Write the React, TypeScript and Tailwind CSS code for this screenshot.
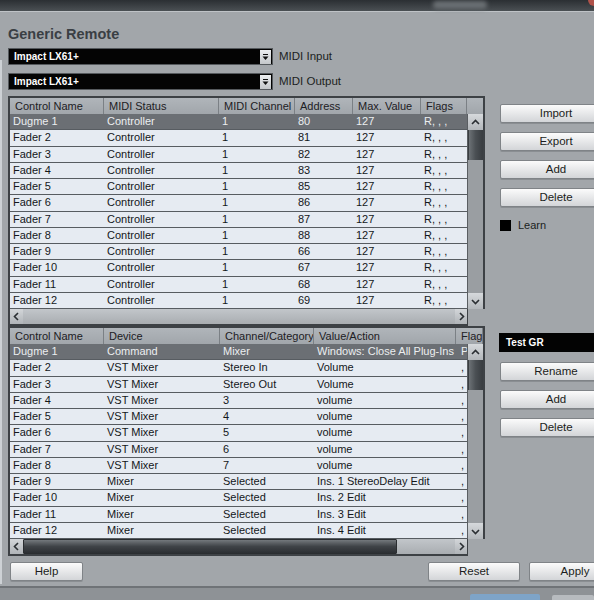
import React from "react";

const rows1 = [
  ["Dugme 1", "Controller", "1", "80", "127", "R, , ,"],
  ["Fader 2", "Controller", "1", "81", "127", "R, , ,"],
  ["Fader 3", "Controller", "1", "82", "127", "R, , ,"],
  ["Fader 4", "Controller", "1", "83", "127", "R, , ,"],
  ["Fader 5", "Controller", "1", "85", "127", "R, , ,"],
  ["Fader 6", "Controller", "1", "86", "127", "R, , ,"],
  ["Fader 7", "Controller", "1", "87", "127", "R, , ,"],
  ["Fader 8", "Controller", "1", "88", "127", "R, , ,"],
  ["Fader 9", "Controller", "1", "66", "127", "R, , ,"],
  ["Fader 10", "Controller", "1", "67", "127", "R, , ,"],
  ["Fader 11", "Controller", "1", "68", "127", "R, , ,"],
  ["Fader 12", "Controller", "1", "69", "127", "R, , ,"],
];

const rows2 = [
  ["Dugme 1", "Command", "Mixer", "Windows: Close All Plug-Ins", "P"],
  ["Fader 2", "VST Mixer", "Stereo In", "Volume", ","],
  ["Fader 3", "VST Mixer", "Stereo Out", "Volume", ","],
  ["Fader 4", "VST Mixer", "3", "volume", ","],
  ["Fader 5", "VST Mixer", "4", "volume", ","],
  ["Fader 6", "VST Mixer", "5", "volume", ","],
  ["Fader 7", "VST Mixer", "6", "volume", ","],
  ["Fader 8", "VST Mixer", "7", "volume", ","],
  ["Fader 9", "Mixer", "Selected", "Ins. 1 StereoDelay Edit", ","],
  ["Fader 10", "Mixer", "Selected", "Ins. 2 Edit", ","],
  ["Fader 11", "Mixer", "Selected", "Ins. 3 Edit", ","],
  ["Fader 12", "Mixer", "Selected", "Ins. 4 Edit", ","],
];

function Chevron({ dir }: { dir: "up" | "down" | "left" | "right" }) {
  const pts = {
    up: "2,7 5.5,3.5 9,7",
    down: "2,4 5.5,7.5 9,4",
    left: "7,2 3.5,5.5 7,9",
    right: "4,2 7.5,5.5 4,9",
  }[dir];
  return (
    <svg width="11" height="11" viewBox="0 0 11 11">
      <polyline points={pts} fill="none" stroke="#2a2e32" strokeWidth="1.6" />
    </svg>
  );
}

function Button({ label, w }: { label: string; w: string }) {
  return (
    <div
      className={`${w} h-[19px] shrink-0 flex items-center justify-center rounded-[2px] border border-[#7f8387] bg-linear-to-b from-[#fbfbfb] to-[#d3d5d8] text-[11.5px] text-[#1b1d20] shadow-[0_1px_0_#8a8e92]`}
    >
      {label}
    </div>
  );
}

function Dropdown({ value, label }: { value: string; label: string }) {
  return (
    <div className="flex h-[17px] items-center">
      <div className="flex h-[17px] w-[265px] items-center justify-between border border-[#55595d] bg-[#040404] pl-[5px] pr-[1px]">
        <span className="text-[10px] font-bold text-white">{value}</span>
        <div className="flex h-[14px] w-[11px] items-center justify-center bg-linear-to-b from-[#eceef0] to-[#c4c7ca]">
          <svg width="7" height="8" viewBox="0 0 7 8">
            <rect x="1" y="1" width="5" height="1" fill="#111" />
            <polygon points="0.5,3.5 6.5,3.5 3.5,7" fill="#111" />
          </svg>
        </div>
      </div>
      <span className="ml-[6px] text-[11.5px] text-[#1c1f22]">{label}</span>
    </div>
  );
}

function VScroll() {
  return (
    <div className="flex w-[16px] flex-col border-l border-[#5a5e62] bg-[#9a9ea2]">
      <div className="flex h-[16px] items-center justify-center bg-linear-to-b from-[#d6d9dc] to-[#b3b7bb]">
        <Chevron dir="up" />
      </div>
      <div className="h-[30px] border-x border-[#3a3e42] bg-linear-to-r from-[#6d7276] via-[#4b5054] to-[#3a3e42]" />
      <div className="flex-1" />
      <div className="flex h-[16px] items-center justify-center bg-linear-to-b from-[#d6d9dc] to-[#b3b7bb]">
        <Chevron dir="down" />
      </div>
    </div>
  );
}

function Table({
  cols,
  headers,
  rows,
  headerTail,
  thumb,
  lastPad,
}: {
  cols: number[];
  headers: string[];
  rows: string[][];
  headerTail: boolean;
  thumb: number;
  lastPad: number;
}) {
  return (
    <div className="flex w-[477px] shrink-0 flex-col">
      <div className="border-x-2 border-t-2 border-[#3d4145]">
        {/* Header */}
        <div className="flex h-[16px] bg-linear-to-b from-[#b0b5ba] to-[#a1a6ab] text-[11px] text-[#1d2024]">
          {headers.map((h, i) => {
            const last = i === headers.length - 1;
            const w = last && !headerTail ? cols[i] + 16 : cols[i];
            return (
              <div
                key={h}
                style={{ width: w }}
                className="shrink-0 overflow-hidden whitespace-nowrap border-r border-[#7b8085] pl-[5px] leading-[16px]"
              >
                {h}
              </div>
            );
          })}
          {headerTail && <div className="w-[16px] shrink-0" />}
        </div>
        {/* Body */}
        <div className="flex h-[195px]">
          <div className="flex w-[457px] flex-col">
            {rows.map((r, ri) => (
              <div
                key={ri}
                className={`flex h-[16.25px] shrink-0 border-b border-[#575c61] text-[11px] leading-[15px] ${
                  ri === 0 ? "bg-[#6b6f74] text-[#eceef0]" : "bg-[#e6ebf2] text-[#14171a]"
                }`}
              >
                {r.map((c, ci) => (
                  <div
                    key={ci}
                    style={{
                      width: cols[ci],
                      paddingLeft: ci === r.length - 1 ? lastPad : 3,
                    }}
                    className="shrink-0 overflow-hidden whitespace-nowrap"
                  >
                    {c}
                  </div>
                ))}
              </div>
            ))}
          </div>
          <VScroll />
        </div>
      </div>
      {/* Horizontal scrollbar */}
      <div className="flex">
        <div className="flex h-[17px] w-[460px] border-b-2 border-l-2 border-r border-[#3d4145] bg-linear-to-b from-[#c2c6ca] to-[#a9adb1]">
          <div className="flex w-[13px] items-center justify-center bg-linear-to-b from-[#d3d6d9] to-[#b0b4b8]">
            <Chevron dir="left" />
          </div>
          {thumb > 0 && (
            <div
              style={{ width: thumb }}
              className="rounded-[1px] border border-[#2a2d30] bg-linear-to-b from-[#74797d] via-[#3f4347] to-[#2c2f33]"
            />
          )}
          <div className="flex-1" />
          <div className="flex w-[12px] items-center justify-center bg-linear-to-b from-[#d3d6d9] to-[#b0b4b8]">
            <Chevron dir="right" />
          </div>
        </div>
      </div>
    </div>
  );
}

export default function App() {
  return (
    <div className="flex h-[600px] w-[594px] flex-col overflow-hidden bg-[#a2a6aa] font-['Liberation_Sans',Arial,sans-serif]">
      {/* Window top strip */}
      <div className="flex h-[11px] shrink-0 items-start bg-linear-to-b from-[#2b2f33] to-[#4b5054]">
        <div className="ml-[433px] mt-[1px] h-[8px] w-[54px] rounded-sm bg-[#6a6f73] blur-[2px]" />
        <div className="ml-auto h-[6px] w-[6px] rounded-bl-full bg-[#b0524a]" />
      </div>
      <div className="h-[1px] shrink-0 bg-[#bfc3c7]" />

      <div className="flex h-[574px] shrink-0">
        <div className="mt-[48px] mb-[2px] w-[2px] shrink-0 bg-[#cdd1d5]" />
        <div className="flex flex-col pl-[6px]">
          <div className="pt-[14px] text-[14.5px] font-bold leading-[17px] text-[#3a3f44]">
            Generic Remote
          </div>
          <div className="mt-[5px] flex flex-col gap-[8px]">
            <Dropdown value="Impact LX61+" label="MIDI Input" />
            <Dropdown value="Impact LX61+" label="MIDI Output" />
          </div>

          {/* Controller table */}
          <div className="mt-[6px] flex">
            <Table
              cols={[94, 115, 76, 58, 68, 46]}
              headers={["Control Name", "MIDI Status", "MIDI Channel", "Address", "Max. Value", "Flags"]}
              rows={rows1}
              headerTail
              thumb={0}
              lastPad={3}
            />
            <div className="ml-[15px] flex flex-col pt-[8px]">
              <div className="flex flex-col gap-[9px]">
                <Button label="Import" w="w-[112px]" />
                <Button label="Export" w="w-[112px]" />
                <Button label="Add" w="w-[112px]" />
                <Button label="Delete" w="w-[112px]" />
              </div>
              <div className="mt-[12px] flex items-center gap-[7px]">
                <div className="h-[11px] w-[11px] bg-black" />
                <span className="text-[11px] leading-[12px] text-[#1b1e21]">Learn</span>
              </div>
            </div>
          </div>

          {/* Bank table */}
          <div className="flex">
            <Table
              cols={[94, 116, 94, 142, 11]}
              headers={["Control Name", "Device", "Channel/Category", "Value/Action", "Flags"]}
              rows={rows2}
              headerTail={false}
              thumb={374}
              lastPad={5}
            />
            <div className="ml-[14px] flex flex-col pt-[7px]">
              <div className="flex h-[19px] w-[113px] items-center bg-[#030303] pl-[7px] text-[10px] font-bold text-white">
                Test GR
              </div>
              <div className="ml-[1px] mt-[10px] flex flex-col gap-[9px]">
                <Button label="Rename" w="w-[112px]" />
                <Button label="Add" w="w-[112px]" />
                <Button label="Delete" w="w-[112px]" />
              </div>
            </div>
          </div>

          {/* Footer buttons */}
          <div className="mt-[6px] flex">
            <div className="ml-[2px]">
              <Button label="Help" w="w-[73px]" />
            </div>
            <div className="ml-[345px]">
              <Button label="Reset" w="w-[92px]" />
            </div>
            <div className="ml-[9px]">
              <Button label="Apply" w="w-[92px]" />
            </div>
          </div>
        </div>
      </div>

      {/* Bottom strip */}
      <div className="h-[2px] shrink-0 bg-[#6f7377]" />
      <div className="flex flex-1 items-end bg-[#8e9296]">
        <div className="ml-[470px] h-[6px] w-[70px] rounded-t-[2px] bg-[#7ea4c8]" />
        <div className="ml-[12px] h-[5px] w-[42px] rounded-t-[2px] bg-[#b7bbbf]" />
      </div>
    </div>
  );
}
